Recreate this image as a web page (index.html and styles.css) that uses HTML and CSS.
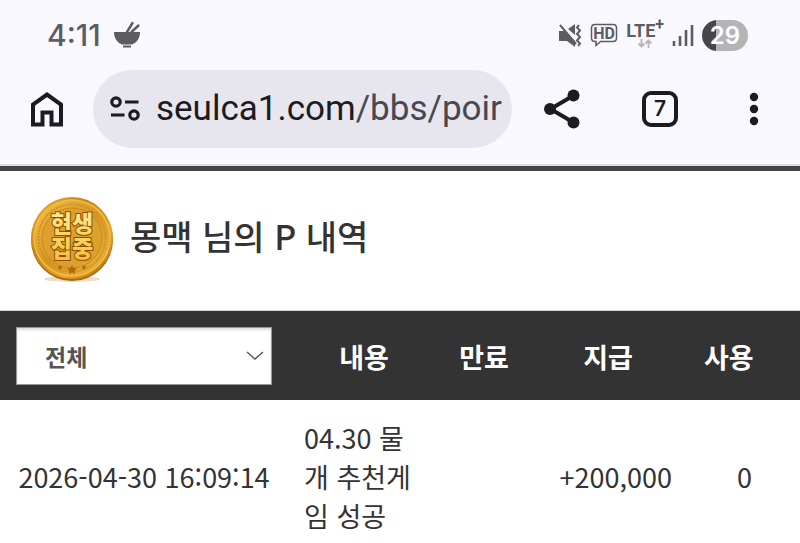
FILE: index.html
```html
<!DOCTYPE html>
<html lang="ko">
  <head>
    <meta charset="UTF-8" />
    <meta name="viewport" content="width=device-width, initial-scale=1.0" />
    <title>몽맥 님의 P 내역</title>
    <link rel="stylesheet" href="styles.css">
  </head>
  <body>
    <header class="browser">
      <div class="status-bar">
        <span class="clock">4:11</span>
        <svg class="bowl" width="28" height="28" viewBox="0 0 28 28" aria-hidden="true">
          <path d="M1 11h26c0 7-4 11-8 12.500H9C5 22 1 18 1 11z" fill="#5c5c61" />
          <path d="M10 25.500h8" stroke="#5c5c61" stroke-width="2" />
          <path d="M14 11l5.500-9M18.500 11l7-6.500" stroke="#5c5c61" stroke-width="2.400" stroke-linecap="round" />
        </svg>
        <div class="status-icons">
          <svg width="24" height="24" viewBox="0 0 24 24" aria-label="무음">
            <path d="M1 8h6l10 10v6l-8-6H1zM10 6l7-5v11z" fill="#5c5c61" />
            <path d="M2 2l16 19" stroke="#5c5c61" stroke-width="2" />
            <path d="M21 2l-2 2.500 3 3-3 3.500 3 3-3 3.500 3 3-2 2.500" fill="none" stroke="#5c5c61" stroke-width="2" />
          </svg>
          <svg class="hd" width="28" height="24" viewBox="0 0 28 24" aria-label="HD">
            <path d="M5 1.500h18q3.500 0 3.500 3.500v10q0 3.500-3.500 3.500H10.500L6 22.500v-4H5Q1.500 18.500 1.500 15V5Q1.500 1.500 5 1.500z" fill="none" stroke="#5c5c61" stroke-width="1.500" />
            <text x="14" y="16" text-anchor="middle">HD</text>
          </svg>
          <div class="lte">
            <span>LTE<sup>+</sup></span>
            <svg width="16" height="9" viewBox="0 0 16 9" aria-hidden="true">
              <path d="M4.500 0v7.500M1.500 4.500l3 3 3-3M11.500 9V1.500M8.500 4.500l3-3 3 3" fill="none" stroke="#b4b4b9" stroke-width="1.800" />
            </svg>
          </div>
          <svg class="signal" width="22" height="24" viewBox="0 0 22 24" aria-label="신호">
            <path d="M2 23v-5M8 23V13M14 23V7M20 23V2" stroke="#5c5c61" stroke-width="2.600" />
          </svg>
          <span class="battery">29</span>
        </div>
      </div>
      <div class="toolbar">
        <button class="icon-button" type="button" aria-label="홈">
          <svg width="34" height="38" viewBox="0 0 34 38">
            <path d="M3 34.500V14.500L17 4.500l14 10v20H21.500V22.500h-9v12z" fill="none" stroke="#1b1b20" stroke-width="4" />
          </svg>
        </button>
        <button class="address" type="button" aria-label="주소창">
          <svg width="30" height="28" viewBox="0 0 30 28" fill="none" stroke="#1b1b20" stroke-width="3.200">
            <circle cx="6" cy="7" r="4.200" />
            <path d="M15 7h13.500M1 20h13.500" />
            <circle cx="24" cy="20" r="4.200" />
          </svg>
          <span class="url">seulca1.com<span class="path">/bbs/poir</span></span>
        </button>
        <button class="icon-button" type="button" aria-label="공유">
          <svg width="36" height="40" viewBox="0 0 36 40">
            <path d="M29.500 6.500L6.500 20l23 13.500" fill="none" stroke="#1b1b20" stroke-width="4" />
            <g fill="#1b1b20">
              <circle cx="29.500" cy="6.500" r="6" />
              <circle cx="6" cy="20" r="6" />
              <circle cx="29.500" cy="33.500" r="6" />
            </g>
          </svg>
        </button>
        <button class="tabs" type="button" aria-label="탭 7개">7</button>
        <button class="icon-button" type="button" aria-label="메뉴">
          <svg width="10" height="34" viewBox="0 0 10 34" fill="#1b1b20">
            <circle cx="5" cy="5" r="4.200" />
            <circle cx="5" cy="17" r="4.200" />
            <circle cx="5" cy="29" r="4.200" />
          </svg>
        </button>
      </div>
    </header>

    <main>
      <div class="title">
        <svg class="coin" width="86" height="90" viewBox="0 0 86 90" aria-hidden="true">
          <defs>
            <linearGradient id="rim" x1="0" y1="0" x2="1" y2="1">
              <stop offset="0" stop-color="#eeb638" />
              <stop offset="0.350" stop-color="#c98417" />
              <stop offset="0.700" stop-color="#e5a52d" />
              <stop offset="1" stop-color="#a65e08" />
            </linearGradient>
            <linearGradient id="face" x1="0" y1="0" x2="1" y2="1">
              <stop offset="0" stop-color="#f4c44b" />
              <stop offset="0.500" stop-color="#d99420" />
              <stop offset="1" stop-color="#efb93f" />
            </linearGradient>
            <linearGradient id="letters" x1="0" y1="0" x2="0" y2="1">
              <stop offset="0" stop-color="#fff0a0" />
              <stop offset="1" stop-color="#f5bd35" />
            </linearGradient>
          </defs>
          <ellipse cx="43" cy="84" rx="28" ry="3" fill="#eadfc6" />
          <circle cx="43" cy="45" r="41" fill="#ad6a0b" />
          <circle cx="43" cy="43" r="41" fill="url(#rim)" />
          <circle cx="43" cy="43" r="38" fill="url(#face)" stroke="#f0bc48" stroke-width="1.500" />
          <circle cx="43" cy="43" r="33.500" fill="none" stroke="#cf9328" stroke-width="2" stroke-dasharray="2 1" />
          <circle cx="43" cy="43" r="30" fill="#dda02b" stroke="#c98a1c" />
          <path d="M43 70l1.500 3 3.500.500-2.500 2.500.5 3-3-1.500-3 1.500.5-3-2.500-2.500 3.500-.500z" fill="#ad6b0c" />
          <path d="M30 71l2 3M56 71l-2 3" stroke="#ad6b0c" stroke-width="3" />
          <text class="coin-text" text-anchor="middle"><tspan x="43" y="37">현생</tspan><tspan x="43" y="62">집중</tspan></text>
        </svg>
        <h1>몽맥 님의 P 내역</h1>
      </div>

      <table class="points">
        <colgroup>
          <col class="col-date" />
          <col class="col-content" />
          <col class="col-expire" />
          <col class="col-give" />
          <col class="col-use" />
          <col class="col-rest" />
        </colgroup>
        <thead>
          <tr>
            <th>
              <div class="select">
                <select name="sort" aria-label="구분">
                  <option>전체</option>
                </select>
                <svg width="18" height="12" viewBox="0 0 18 12" aria-hidden="true">
                  <path d="M1 2l8 7 8-7" fill="none" stroke="#555" stroke-width="1.400" />
                </svg>
              </div>
            </th>
            <th>내용</th>
            <th>만료</th>
            <th>지급</th>
            <th>사용</th>
            <td></td>
          </tr>
        </thead>
        <tbody>
          <tr>
            <td class="date">2026-04-30 16:09:14</td>
            <td class="content">04.30 물개 추천게임 성공</td>
            <td></td>
            <td class="number">+200,000</td>
            <td class="number">0</td>
            <td></td>
          </tr>
        </tbody>
      </table>
    </main>
  </body>
</html>
```

FILE: styles.css
```css
:root {
  --bar-color: #f9f8ff;
  --icon-color: #5c5c61;
  --dark-color: #1b1b20;
  --text-color: #333;
}

*,
*::before,
*::after {
  box-sizing: border-box;
}

body {
  margin: 0;
  background-color: #fff;
  color: var(--text-color);
  font-family: "Noto Sans CJK KR", sans-serif;
}

button {
  padding: 0;
  border: 0;
  background: none;
  color: var(--dark-color);
}

svg {
  display: block;
  flex-shrink: 0;
}

/* browser */
.browser {
  background-color: var(--bar-color);
  border-bottom: 5px solid #454545;
  font-family: Roboto, sans-serif;
}

.status-bar {
  display: flex;
  align-items: center;
  height: 70px;
  padding: 0 52px 0 47px;
  color: var(--icon-color);
}

.clock {
  font-family: Inter, sans-serif;
  font-size: 30px;
  font-weight: 500;
}

.bowl {
  margin-left: 12px;
}

.status-icons {
  display: flex;
  align-items: center;
  gap: 8px;
  margin-left: auto;
}

.hd text {
  fill: var(--icon-color);
  font-size: 16px;
  font-weight: 700;
}

.lte {
  display: flex;
  flex-direction: column;
  align-items: center;
  font-size: 18px;
  font-weight: 700;
  line-height: 16px;
}

.lte sup {
  font-size: 16px;
  line-height: 0;
}

.battery {
  width: 46px;
  border-radius: 16px;
  background: linear-gradient(to right, #47474b 30%, #b4b4b8 30%);
  color: #fff;
  font-family: Inter, sans-serif;
  font-size: 24px;
  font-weight: 600;
  line-height: 31px;
  text-align: center;
}

.toolbar {
  display: flex;
  align-items: center;
  padding: 0 41px 16px 30px;
  border-bottom: 2px solid #dedee2;
}

.address {
  display: flex;
  flex: 1;
  align-items: center;
  gap: 16px;
  min-width: 0;
  height: 78px;
  margin: 0 32px 0 29px;
  padding: 0 10px 0 17px;
  border-radius: 39px;
  background-color: #e7e5ee;
}

.url {
  font-family: Roboto, sans-serif;
  font-size: 35px;
  line-height: 48px;
  white-space: nowrap;
}

.path {
  color: #484852;
}

.tabs {
  width: 36px;
  height: 36px;
  margin: 0 71px 0 62px;
  border: 4px solid var(--dark-color);
  border-radius: 9px;
  font-family: Inter, sans-serif;
  font-size: 21px;
  font-weight: 600;
  line-height: 28px;
}

/* title */
.title {
  display: flex;
  align-items: flex-start;
  gap: 15px;
  padding: 24px 29px 25px;
  border-bottom: 1px solid #d5dbdd;
}

h1 {
  margin: 0;
  font-size: 34px;
  font-weight: 500;
  line-height: 82px;
}

.coin-text {
  fill: url(#letters);
  stroke: #8c4f04;
  stroke-width: 2px;
  paint-order: stroke;
  font-size: 23px;
  font-weight: 900;
}

/* points */
.points {
  width: 100%;
  border-collapse: collapse;
  table-layout: fixed;
  font-size: 27px;
  line-height: 39px;
}

.col-date {
  width: 36%;
}

.col-content {
  width: 19%;
}

.col-expire {
  width: 11%;
}

.col-give {
  width: 20%;
}

.col-use {
  width: 10%;
}

.col-rest {
  width: 4%;
}

.points thead {
  background-color: #333;
  color: #fff;
}

.points th {
  padding: 16px 16px 15px;
  white-space: nowrap;
}

.points td {
  padding: 18px 16px 7px;
}

.points .date {
  text-align: center;
  white-space: nowrap;
}

.points .content {
  padding-right: 24px;
}

.points .number {
  text-align: right;
}

.select {
  display: grid;
  align-items: center;
}

.select select,
.select svg {
  grid-area: 1 / 1;
}

.select select {
  width: 100%;
  height: 58px;
  padding: 0 28px;
  border: 1px solid #999;
  border-radius: 0;
  appearance: none;
  background-color: #fff;
  box-shadow: inset 0 2px 3px #ddd;
  color: #555;
  font-family: inherit;
  font-size: 23px;
  font-weight: 700;
}

.select svg {
  justify-self: end;
  margin-right: 8px;
  pointer-events: none;
}
```
